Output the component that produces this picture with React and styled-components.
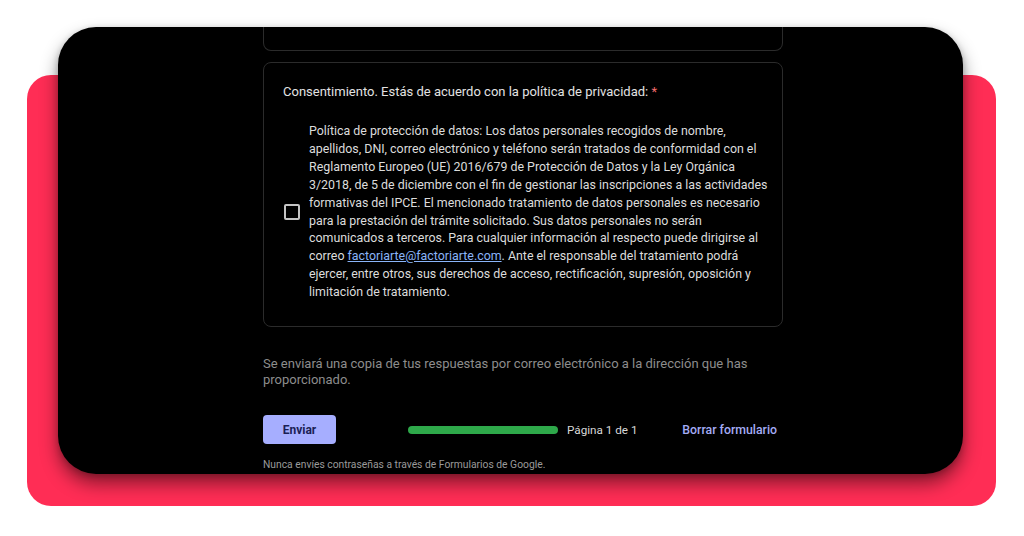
import React from "react";
import styled, { createGlobalStyle } from "styled-components";

const GlobalStyle = createGlobalStyle`
  html, body {
    margin: 0;
    padding: 0;
    background: #ffffff;
  }
  body {
    font-family: Roboto, "Noto Sans", Arial, sans-serif;
  }
`;

const Stage = styled.div`
  width: 1024px;
  height: 536px;
  display: grid;
  grid-template-columns: 1fr;
  grid-template-rows: 1fr;
  overflow: hidden;
`;

const Backdrop = styled.div`
  grid-area: 1 / 1;
  margin: 75px 28px 30px 27px;
  background: #ff2d55;
  border-radius: 24px;
`;

const Screen = styled.div`
  grid-area: 1 / 1;
  margin: 27px 61px 62px 58px;
  background: #000000;
  border-radius: 38px;
  overflow: hidden;
  box-shadow: 0 10px 18px rgba(0, 0, 0, 0.45), 0 2px 6px rgba(0, 0, 0, 0.2);
  padding-left: 205px;
`;

const Column = styled.div`
  width: 520px;
  display: flex;
  flex-direction: column;
`;

const PrevCard = styled.div`
  height: 23px;
  border: 1px solid #2b2b2b;
  border-top: none;
  border-radius: 0 0 8px 8px;
`;

const Card = styled.div`
  margin-top: 11px;
  border: 1px solid #2b2b2b;
  border-radius: 8px;
  padding: 19px 19px 25px 19px;
`;

const Title = styled.div`
  font-size: 13px;
  line-height: 20px;
  color: #e3e3e3;

  span {
    color: #f26b6b;
  }
`;

const Option = styled.label`
  margin-top: 20px;
  display: flex;
  align-items: center;
  gap: 9px;
  padding-left: 1px;
`;

const Box = styled.span`
  flex: none;
  width: 12px;
  height: 12px;
  border: 2px solid #c4c4c4;
  border-radius: 2px;
`;

const Policy = styled.p`
  margin: 0;
  width: 470px;
  white-space: nowrap;
  font-size: 12.4px;
  line-height: 17.9px;
  color: #dcdcdc;

  a {
    color: #8ab4f8;
    text-decoration: underline;
  }
`;

const Note = styled.p`
  margin: 29px 0 0;
  font-size: 13px;
  line-height: 16px;
  color: #8d8d8d;
`;

const Actions = styled.div`
  margin-top: 27px;
  display: flex;
  align-items: center;
`;

const Submit = styled.button`
  width: 73px;
  height: 29px;
  border: none;
  border-radius: 4px;
  background: #a6aeff;
  color: #1b1f55;
  font-family: Roboto, sans-serif;
  font-weight: 700;
  font-size: 12px;
  padding: 0;
`;

const Progress = styled.div`
  margin-left: 72px;
  width: 150px;
  height: 8px;
  border-radius: 4px;
  background: #2ea84a;
`;

const PageLabel = styled.span`
  margin-left: 9px;
  font-size: 11.7px;
  color: #d8d8d8;
`;

const Reset = styled.span`
  margin-left: auto;
  margin-right: 6px;
  font-size: 12.3px;
  font-weight: 500;
  color: #a4acf5;
`;

const Footer = styled.p`
  margin: 15px 0 0;
  font-size: 10.3px;
  line-height: 12px;
  color: #9a9a9a;
`;

const lines = [
  "Política de protección de datos: Los datos personales recogidos de nombre,",
  "apellidos, DNI, correo electrónico y teléfono serán tratados de conformidad con el",
  "Reglamento Europeo (UE) 2016/679 de Protección de Datos y la Ley Orgánica",
  "3/2018, de 5 de diciembre con el fin de gestionar las inscripciones a las actividades",
  "formativas del IPCE. El mencionado tratamiento de datos personales es necesario",
  "para la prestación del trámite solicitado. Sus datos personales no serán",
  "comunicados a terceros. Para cualquier información al respecto puede dirigirse al",
];

export default function App() {
  return (
    <>
      <GlobalStyle />
      <Stage>
        <Backdrop />
        <Screen>
          <Column>
            <PrevCard />
            <Card>
              <Title>
                Consentimiento. Estás de acuerdo con la política de privacidad: <span>*</span>
              </Title>
              <Option>
                <Box />
                <Policy>
                  {lines.map((l) => (
                    <React.Fragment key={l}>
                      {l}
                      <br />
                    </React.Fragment>
                  ))}
                  correo <a>factoriarte@factoriarte.com</a>. Ante el responsable del tratamiento podrá
                  <br />
                  ejercer, entre otros, sus derechos de acceso, rectificación, supresión, oposición y
                  <br />
                  limitación de tratamiento.
                </Policy>
              </Option>
            </Card>
            <Note>
              Se enviará una copia de tus respuestas por correo electrónico a la dirección que has
              proporcionado.
            </Note>
            <Actions>
              <Submit>Enviar</Submit>
              <Progress />
              <PageLabel>Página 1 de 1</PageLabel>
              <Reset>Borrar formulario</Reset>
            </Actions>
            <Footer>Nunca envíes contraseñas a través de Formularios de Google.</Footer>
          </Column>
        </Screen>
      </Stage>
    </>
  );
}
